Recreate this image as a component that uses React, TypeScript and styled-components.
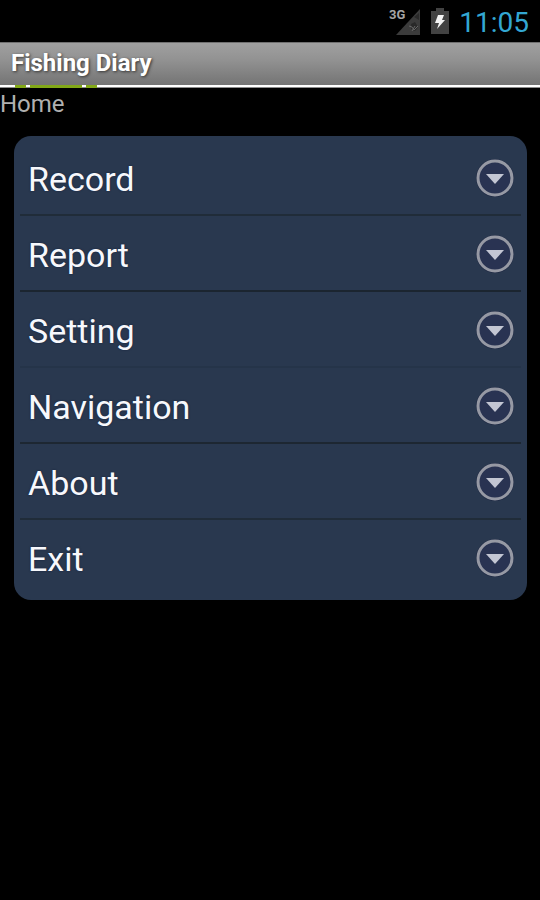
import React from "react";
import styled, { createGlobalStyle } from "styled-components";

const GlobalStyle = createGlobalStyle`
  *, *::before, *::after { box-sizing: border-box; }
  body {
    margin: 0;
    background: #000;
    font-family: Roboto, "Noto Sans", sans-serif;
  }
`;

const Screen = styled.div`
  min-height: 100vh;
  background: #000;
`;

const StatusBar = styled.header`
  display: flex;
  align-items: center;
  justify-content: flex-end;
  height: 42px;
  padding-right: 11px;
`;

const StatusIcon = styled.svg<{ $gap: number }>`
  display: block;
  flex: none;
  margin-right: ${({ $gap }) => $gap}px;
`;

const Clock = styled.time`
  color: #33a7d2;
  font-size: 28px;
  line-height: 42px;
  padding-top: 3px;
`;

const TitleBar = styled.div`
  height: 43px;
  padding-left: 11px;
  background: linear-gradient(#a0a0a0, #929292 40%, #747474);
  border-top: 1px solid #707070;
`;

const Title = styled.h1`
  margin: 0;
  color: #fff;
  font-size: 24px;
  font-weight: 700;
  line-height: 40px;
  text-shadow: 1px 1px 3px #333;
`;

const TabStrip = styled.div`
  display: flex;
  gap: 4px;
  height: 3px;
  padding-left: 15px;
  background: #fff;
  border-bottom: 1px solid #8c8c8c;
`;

const TabMark = styled.span<{ $width: number }>`
  width: ${({ $width }) => $width}px;
  height: 3px;
  background: #82a818;
`;

const Location = styled.p`
  margin: 0;
  color: #b0b0b0;
  font-size: 24px;
  line-height: 32px;
`;

const Menu = styled.nav`
  margin: 16px 13px 0 14px;
  padding: 4px 6px;
  border-radius: 17px;
  background: #29384f;
`;

const MenuRow = styled.button<{ $line: string }>`
  display: flex;
  align-items: center;
  justify-content: space-between;
  width: 100%;
  height: 76px;
  padding: 2px 7px 0 8px;
  border: 0;
  border-bottom: 2px solid ${({ $line }) => $line};
  background: none;
  color: #f7f8fc;
  font-family: inherit;
  font-size: 34px;
  line-height: 40px;
  text-align: left;
  text-shadow: 0 0 2px #14203c;
  cursor: pointer;
`;

const RowLabel = styled.span`
  padding-top: 2px;
`;

const Arrow = styled.svg`
  display: block;
  flex: none;
`;

const items = [
  { label: "Record", line: "#202c39" },
  { label: "Report", line: "#1b2530" },
  { label: "Setting", line: "#253449" },
  { label: "Navigation", line: "#1d2732" },
  { label: "About", line: "#202c39" },
  { label: "Exit", line: "transparent" },
];

function SignalIcon() {
  return (
    <StatusIcon $gap={10} width="32" height="28" viewBox="0 0 32 28" aria-label="3G signal">
      <path d="M31 2V28H7Z" fill="#3b3b3b" />
      <path d="M25 10l5-4v7zM22 17l4-2 3 5-3 4-4-2z" fill="#292929" />
      <path d="M20 19l3 1 2 3 4-4M23 24l3-5" fill="none" stroke="#666" strokeWidth="1" />
      <text x="0" y="12" fill="#a5a5a5" fontFamily="Roboto, sans-serif" fontSize="13" fontWeight="700">3G</text>
    </StatusIcon>
  );
}

function BatteryIcon() {
  return (
    <StatusIcon $gap={10} width="18" height="28" viewBox="0 0 18 28" aria-label="Battery charging">
      <path d="M5 1h8v3h5v23H0V4h5Z" fill="#424242" />
      <path d="M7 8h6l-2 5h3l-8 9 2-6H4Z" fill="#f4f4f4" />
    </StatusIcon>
  );
}

function ExpandIcon() {
  return (
    <Arrow width="38" height="38" viewBox="0 0 38 38" aria-hidden="true">
      <circle cx="19" cy="19" r="18" fill="#293352" stroke="#202b45" strokeWidth="2" />
      <circle cx="19" cy="19" r="17" fill="none" stroke="#9699a4" strokeWidth="3" />
      <path d="M10 15H28L19 25Z" fill="#c3c6d3" />
    </Arrow>
  );
}

export default function App() {
  return (
    <Screen>
      <GlobalStyle />
      <StatusBar>
        <SignalIcon />
        <BatteryIcon />
        <Clock>11:05</Clock>
      </StatusBar>
      <TitleBar>
        <Title>Fishing Diary</Title>
      </TitleBar>
      <TabStrip>
        <TabMark $width={11} />
        <TabMark $width={52} />
        <TabMark $width={11} />
      </TabStrip>
      <Location>Home</Location>
      <Menu>
        {items.map((item) => (
          <MenuRow key={item.label} type="button" $line={item.line}>
            <RowLabel>{item.label}</RowLabel>
            <ExpandIcon />
          </MenuRow>
        ))}
      </Menu>
    </Screen>
  );
}
